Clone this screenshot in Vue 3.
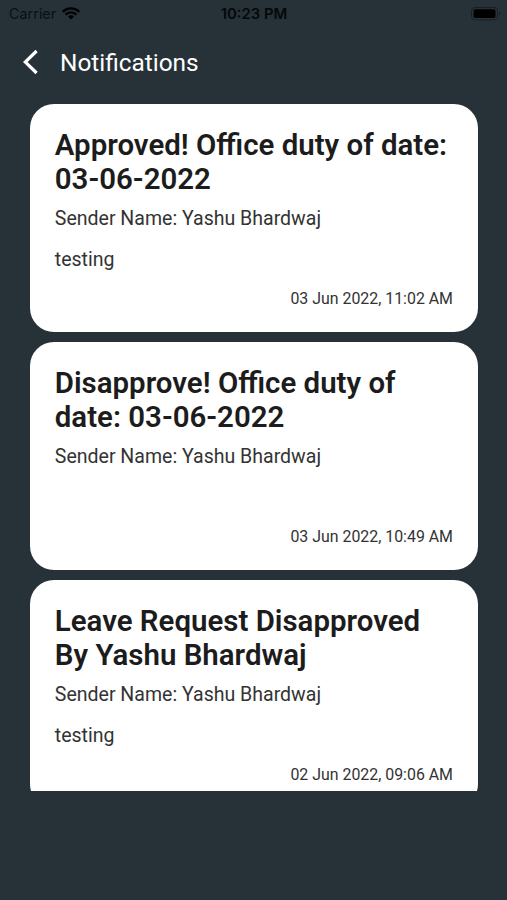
<script setup>
const notifications = [
  {
    title: ['Approved! Office duty of date:', '03-06-2022'],
    sender: 'Yashu Bhardwaj',
    message: 'testing',
    time: '03 Jun 2022, 11:02 AM',
  },
  {
    title: ['Disapprove! Office duty of', 'date: 03-06-2022'],
    sender: 'Yashu Bhardwaj',
    message: '',
    time: '03 Jun 2022, 10:49 AM',
  },
  {
    title: ['Leave Request Disapproved', 'By Yashu Bhardwaj'],
    sender: 'Yashu Bhardwaj',
    message: 'testing',
    time: '02 Jun 2022, 09:06 AM',
  },
]
</script>

<template>
  <div class="screen">
    <div class="status">
      <div class="carrier">
        <span>Carrier</span>
        <svg class="wifi" viewBox="0 0 18 13" width="18" height="13">
          <path d="M0.8 4.8a11.6 11.6 0 0 1 16.4 0" />
          <path d="M3.6 7.6a7.6 7.6 0 0 1 10.8 0" />
          <path class="dot" d="M9 12.6 5.9 9.5a4.4 4.4 0 0 1 6.2 0z" />
        </svg>
      </div>
      <span class="clock">10:23 PM</span>
      <svg class="battery" viewBox="0 0 30 14" width="30" height="14">
        <rect class="case" x="0.5" y="0.5" width="26" height="12.4" rx="3.5" />
        <rect x="2.5" y="2.3" width="22" height="8.8" rx="1.8" />
        <path class="cap" d="M28 4.8c1.6.6 1.6 3.2 0 3.8z" />
      </svg>
    </div>

    <header class="header">
      <svg class="back" viewBox="0 0 16 26" width="16" height="26">
        <path d="M13.6 2 2.2 13 13.6 24" />
      </svg>
      <h1>Notifications</h1>
    </header>

    <main class="list">
      <article v-for="item in notifications" :key="item.time" class="card">
        <h2>
          <span v-for="line in item.title" :key="line">{{ line }}</span>
        </h2>
        <p class="sender">Sender Name: {{ item.sender }}</p>
        <p class="message">{{ item.message }}</p>
        <time>{{ item.time }}</time>
      </article>
    </main>
  </div>
</template>

<style>
body {
  margin: 0;
  background: #263238;
}
</style>

<style scoped>
.screen {
  box-sizing: border-box;
  height: 900px;
  overflow: hidden;
  background: #263238;
  font-family: Roboto, sans-serif;
}

.status {
  box-sizing: border-box;
  display: grid;
  grid-template-columns: 1fr auto 1fr;
  align-items: center;
  height: 27px;
  padding: 0 6px 0 9px;
  color: #0b0f11;
  font-family: Inter, sans-serif;
  font-size: 14.4px;
}

.carrier {
  display: flex;
  align-items: center;
  gap: 6px;
}

.wifi {
  fill: none;
  stroke: #000;
  stroke-width: 2.4;
}

.wifi .dot {
  fill: #000;
  stroke: none;
}

.clock {
  color: #05080a;
  font-size: 14.9px;
  font-weight: 600;
  transform: translateX(-1px);
}

.battery {
  justify-self: end;
}

.battery .case {
  fill: none;
  stroke: #182024;
}

.battery .cap {
  fill: #182024;
}

.header {
  box-sizing: border-box;
  display: flex;
  align-items: center;
  gap: 21px;
  height: 76.5px;
  padding: 0 0 6px 23px;
}

.back {
  fill: none;
  stroke: #fff;
  stroke-width: 3.2;
}

h1 {
  margin: 1px 0 0;
  color: #fff;
  font-size: 24.4px;
  font-weight: 400;
  line-height: 30px;
}

.list {
  display: flex;
  flex-direction: column;
  gap: 10px;
  height: 687.5px;
  padding: 0 29.5px 0 30.3px;
  overflow: hidden;
}

.card {
  box-sizing: border-box;
  display: flex;
  flex: none;
  flex-direction: column;
  height: 228.2px;
  padding: 24.5px 24.5px 0;
  border-radius: 24px;
  background: #fff;
  color: #333;
}

h2 {
  margin: 0;
  color: #1c1c1c;
  font-size: 29.45px;
  font-weight: 600;
  line-height: 34px;
}

h2 span {
  display: block;
  white-space: nowrap;
}

p {
  margin: 0;
  font-size: 19.55px;
  line-height: 24px;
}

.sender {
  margin-top: 11px;
}

.message {
  height: 24px;
  margin-top: 17px;
}

time {
  align-self: flex-end;
  margin-top: 16.5px;
  font-size: 15.9px;
  line-height: 20px;
}
</style>
